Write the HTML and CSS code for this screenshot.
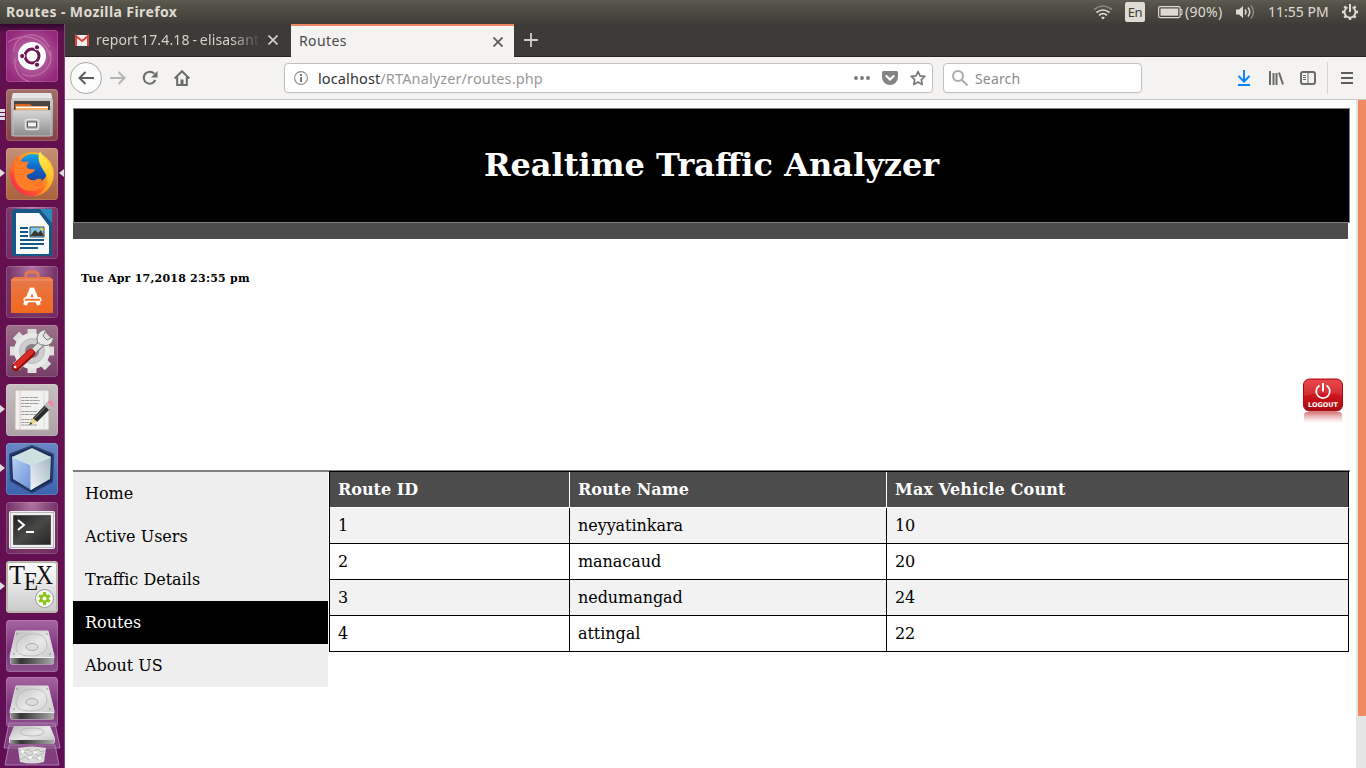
FILE: index.html
```html
<!DOCTYPE html>
<html lang="en">
<head>
<meta charset="utf-8">
<title>Routes</title>
<link rel="stylesheet" href="styles.css">
</head>
<body>
<svg width="0" height="0" class="defs">
  <defs>
    <linearGradient id="silver" x1="0" y1="0" x2="0" y2="1"><stop offset="0" stop-color="#d6d6d6"/><stop offset="1" stop-color="#8d8d8d"/></linearGradient>
    <linearGradient id="metal" x1="0" y1="0" x2="1" y2="1"><stop offset="0" stop-color="#b8b8b8"/><stop offset=".5" stop-color="#e8e8e8"/><stop offset="1" stop-color="#c4c4c4"/></linearGradient>
    <linearGradient id="flame" x1="1" y1="0" x2="0" y2="1"><stop offset="0" stop-color="#ffd22f"/><stop offset=".35" stop-color="#ffa422"/><stop offset=".62" stop-color="#ff5a2a"/><stop offset=".85" stop-color="#f5334a"/><stop offset="1" stop-color="#e31587"/></linearGradient>
    <linearGradient id="tail" x1="0" y1="0" x2="0" y2="1"><stop offset="0" stop-color="#fff251"/><stop offset=".6" stop-color="#ffc02b"/><stop offset="1" stop-color="#ff8a20"/></linearGradient>
    <linearGradient id="globe" x1="0" y1="0" x2="0" y2="1"><stop offset="0" stop-color="#19a4ea"/><stop offset=".5" stop-color="#0d62c4"/><stop offset="1" stop-color="#1a3c94"/></linearGradient>
    <linearGradient id="bag" x1="0" y1="0" x2="0" y2="1"><stop offset="0" stop-color="#e8784a"/><stop offset="1" stop-color="#f0691f"/></linearGradient>
    <linearGradient id="cubeL" x1="0" y1="0" x2="1" y2="1"><stop offset="0" stop-color="#b6d0f6"/><stop offset="1" stop-color="#6d92d4"/></linearGradient>
    <linearGradient id="cubeR" x1="0" y1="1" x2="1" y2="0"><stop offset="0" stop-color="#eef4f8"/><stop offset="1" stop-color="#a3b6bf"/></linearGradient>
    <linearGradient id="screen" x1="0" y1="0" x2="1" y2="1"><stop offset="0" stop-color="#202020"/><stop offset=".5" stop-color="#484a47"/><stop offset="1" stop-color="#252525"/></linearGradient>
    <linearGradient id="red" x1="0" y1="0" x2="0" y2="1"><stop offset="0" stop-color="#e8343a"/><stop offset=".5" stop-color="#cf151c"/><stop offset="1" stop-color="#a90a10"/></linearGradient>
    <linearGradient id="fade" x1="0" y1="0" x2="0" y2="1"><stop offset="0" stop-color="#c1262b" stop-opacity=".65"/><stop offset="1" stop-color="#d98286" stop-opacity="0"/></linearGradient>
    <linearGradient id="edge" x1="0" y1="0" x2="1" y2="0"><stop offset="0" stop-color="#999"/><stop offset=".25" stop-color="#333"/><stop offset="1" stop-color="#aaa"/></linearGradient>
    <symbol id="drive" viewBox="0 0 46 36">
      <path d="M7 1h32l6 25-1 8H2L1 26Z" fill="url(#metal)" stroke="#ddd"/>
      <path d="M1 28h44v6H2Z" fill="url(#edge)"/>
      <path d="M1 27.500h44" stroke="#f0f0f0" stroke-width="1.200"/>
      <path d="M7 18c0-8 7-14 17-14 9 0 13 3 14 10 1 8-7 12-16 12-8 0-15-2-15-8Z" fill="none" stroke="#b5b5b5" stroke-width=".8"/>
      <ellipse cx="23" cy="17" rx="6" ry="3.500" fill="#ddd" stroke="#aaa"/>
      <circle cx="8" cy="4" r=".8" fill="#888"/><circle cx="38" cy="4" r=".8" fill="#888"/><circle cx="5" cy="24" r=".8" fill="#888"/><circle cx="41" cy="24" r=".8" fill="#888"/>
    </symbol>
  </defs>
</svg>

<header class="panel">
  <span class="panel-title">Routes - Mozilla Firefox</span>
  <div class="indicators">
    <svg class="wifi" width="20" height="16" viewBox="0 0 20 16" fill="none" stroke="#dfdbd2" stroke-width="1.700"><path d="M1 5.500q9-7 18 0" stroke="#8b8880"/><path d="M3.500 8.500q6.500-5 13 0M6 11.300q4-3.200 8 0"/><path d="M8 13.500q2-1.500 4 0l-2 2Z" fill="#dfdbd2" stroke="none"/></svg>
    <span class="lang">En</span>
    <svg class="battery" width="25" height="14" viewBox="0 0 25 14"><rect x=".6" y="1.600" width="21.500" height="11" rx="1.500" fill="none" stroke="#dfdbd2" stroke-width="1.200"/><path d="M2.500 3.500h17.700v7.200H2.500Z" fill="#dfdbd2"/><path d="M22 4.500h2v5h-2" fill="none" stroke="#dfdbd2"/></svg>
    <span class="charge">(90%)</span>
    <svg class="volume" width="20" height="16" viewBox="0 0 20 16" fill="none" stroke="#dfdbd2" stroke-width="1.500"><path d="M1 5.500h3L8 2v12l-4-3.500H1Z" fill="#dfdbd2" stroke="none"/><path d="M10 5.500q2 2.500 0 5M13 3.500q3.500 4.500 0 9"/><path d="M16 1.500q5 6.500 0 13" stroke="#8b8880"/></svg>
    <span class="clock">11:55 PM</span>
    <svg class="gear" width="18" height="18" viewBox="0 0 18 18" fill="none" stroke="#dfdbd2"><path d="M6.500 4.200a5.500 5.500 0 1 0 5 0" stroke-width="1.800"/><path d="M9 1v8" stroke-width="2"/><path d="M3.300 3.300l1.700 1.700M14.700 3.300L13 5M1 9h2.500M14.500 9H17M3.300 14.700L5 13M14.700 14.700L13 13M9 14.500V17" stroke-width="2.400"/></svg>
  </div>
</header>

<div class="desktop">
  <nav class="launcher">
    <div class="tile dash"><svg viewBox="0 0 52 52"><g fill="none" stroke="#e9b4da" stroke-opacity=".4" stroke-width="1.200"><path d="M8 22C7 4 34-3 43 17M44 21c5 18-13 30-28 23M9 28C8 42 14 49 24 52M2 12C18 3 38 5 45 28"/></g><circle cx="26" cy="26" r="14" fill="#fff"/><circle cx="26" cy="26" r="7" fill="none" stroke="#711454" stroke-width="3"/><g fill="#711454" stroke="#fff"><circle cx="16.200" cy="26" r="2.600"/><circle cx="31" cy="17.300" r="2.600"/><circle cx="31" cy="34.700" r="2.600"/></g></svg></div>
    <div class="tile files multi"><svg viewBox="0 0 52 52"><path d="M7 4h38l2 8v35H5V12Z" fill="url(#silver)"/><path d="M7 4h38l1 5H6Z" fill="#e6e6e6"/><path d="M8 12h36v12H8Z" fill="#4b4541"/><path d="M9 15h15l2 2h16v6H9Z" fill="#d5671d"/><path d="M10 17.500h32v1.500H10Z" fill="#fff"/><path d="M10 19h32v3H10Z" fill="#f6ae65"/><path d="M7 21.500h38V47H7Z" fill="url(#silver)" stroke="#c3c3c3"/><rect x="19.500" y="30.500" width="13" height="10" rx="2" fill="#aaa" stroke="#e3e3e3" stroke-width="1.500"/><path d="M21.500 33h9v5h-9Z" fill="#f4f4f4" stroke="#555"/></svg></div>
    <div class="tile firefox running current"><svg viewBox="0 0 52 52"><circle cx="26" cy="26" r="22" fill="url(#flame)"/><path d="M5 24C4 17 8 12 11 8q1 4 5 6l-4 8Z" fill="#ff6a2b"/><circle cx="27" cy="21" r="15" fill="url(#globe)"/><path d="M8 13q6-1 10 1 3-1 5 0-3 3-2 6 4 2 8 1 0 3-6 5-3 1-2 3c3 4 7 4 10 2q4-1 5 1-3 5-9 5 6 3 12-1-5 7-14 7C12 43 6 30 9 19Z" fill="#ff7d26"/><path d="M34 3c3 7 14 12 13 26-1 11-9 18-18 19 9-4 14-11 12-19-2-7-12-14-7-26Z" fill="url(#tail)"/></svg></div>
    <div class="tile writer"><svg viewBox="0 0 52 52"><path d="M10 2h24l12 14v33H8q-2 0-2-3V5q0-3 4-3Z" fill="#155787"/><path d="M10 6h23l10 12v28q0 1-1 1H10Z" fill="#fafafa"/><path d="M34 2h12v14Z" fill="#278cbd"/><path d="M34 7l9 12V16L35 5Z" fill="#1a5b89"/><path d="M14 21h8M14 25h8M14 29h8M14 33h24M14 37h24M14 41h18" stroke="#155787" stroke-width="1.800"/><path d="M24 20h14v10H24Z" fill="#83c7e8" stroke="#34495a"/><path d="M24 29l5-6 3 3 3-3 3 6Z" fill="#3b382e"/><circle cx="36" cy="22" r="1.600" fill="#f4d33f"/></svg></div>
    <div class="tile software"><svg viewBox="0 0 52 52"><path d="M5 14l3-3h36l3 3v33H5Z" fill="url(#bag)"/><path d="M20 18V9q0-3 3-3h6q3 0 3 3v9" fill="none" stroke="#e6794c" stroke-width="3"/><path d="M5 14h42" stroke="#f29867"/><path d="M26 22l-7 17M26 22l7 17" stroke="#fff" stroke-width="4"/><rect x="18" y="32" width="17" height="3.500" rx="1.700" fill="#ef7630" stroke="#fff" stroke-width="1.300"/></svg></div>
    <div class="tile settings"><svg viewBox="0 0 52 52"><g stroke="#dedede" stroke-width="9"><path d="M26 4v44M4 26h44M10 10l32 32M42 10L10 42"/></g><circle cx="26" cy="26" r="18" fill="#e8e8e8"/><circle cx="26" cy="26" r="12.500" fill="#cdcdcd" stroke="#bbb"/><circle cx="26" cy="26" r="7" fill="#8c7c87"/><path d="M19 34L38 16" stroke="#777" stroke-width="7"/><path d="M19 34L38 16" stroke="#e1e1e1" stroke-width="5"/><path d="M31 14c0-6 5-10 9-9l-3 6 4 4 6-3c1 6-5 10-10 8-4 0-6-3-6-6Z" fill="#e8e8e8" stroke="#777"/><path d="M10 42l15-14" stroke="#8e0d0d" stroke-width="8" stroke-linecap="round"/><path d="M10 41l15-14" stroke="#db2b25" stroke-width="5.500" stroke-linecap="round"/><circle cx="9" cy="42" r="1.300" fill="#fff"/></svg></div>
    <div class="tile gedit running"><svg viewBox="0 0 52 52"><path d="M9 6h34v40H9Z" fill="#f1f1ee" stroke="#b8b2ac"/><path d="M14 6v40" stroke="#efbaba" stroke-width=".8"/><path d="M38 6v40" stroke="#cad6ed" stroke-width=".8"/><path d="M15 13.500h17M15 16.500h19M15 19.500h18M15 22.500h10M15 27.500h16M15 30.500h15M15 35.500h14M15 38.500h11M15 41h16" stroke="#a0a0a2" stroke-dasharray="3 .4 5 .4"/><path d="M26.500 34.500l13-14 4.500 4.500-13 13Z" fill="#282c2c"/><path d="M28.500 34.500l12-12.500" stroke="#888"/><path d="M26.500 34l5 4-8.500 3Z" fill="#e8d383"/><path d="M25 38l-2 3 3-1Z" fill="#222"/><path d="M38 21l3-3 5 5-3 3Z" fill="#bbb"/><path d="M41 18q3-3 6 0 2 3-1 5Z" fill="#e98bac"/></svg></div>
    <div class="tile netbeans running"><svg viewBox="0 0 52 52"><path d="M26 4l20 8-1 26-19 10L6 37 5 12Z" fill="#182549" stroke="#1c2b58" stroke-width="4" stroke-linejoin="round" stroke-opacity=".75"/><path d="M26 5l19 9-20 8L6 14Z" fill="#cde0e0"/><path d="M6 14l19 8v25L7 36Z" fill="url(#cubeL)"/><path d="M45 14l-20 8v25l19-11Z" fill="url(#cubeR)"/><path d="M6 14l19 8 20-8M25 22v25" fill="none" stroke="#dcebf6"/></svg></div>
    <div class="tile terminal"><svg viewBox="0 0 52 52"><rect x="3.500" y="9.500" width="45" height="37" rx="1" fill="#b8b8b8" stroke="#eee"/><path d="M5 11h42v34H5Z" fill="#efefef"/><path d="M7.500 13.500h37v29h-37Z" fill="url(#screen)" stroke="#555"/><path d="M12 18l6 5-6 5M20 30h8" fill="none" stroke="#fff" stroke-width="2"/></svg></div>
    <div class="tile tex running"><svg viewBox="0 0 52 52"><g font-family="Liberation Serif, serif" font-size="27" fill="#111"><text x="3" y="23" textLength="16" lengthAdjust="spacingAndGlyphs">T</text><text x="18" y="29" font-size="26" textLength="14" lengthAdjust="spacingAndGlyphs">E</text><text x="30" y="23" textLength="17" lengthAdjust="spacingAndGlyphs">X</text></g><circle cx="38.500" cy="37.500" r="9" fill="#f7f7f7" stroke="#999"/><g stroke="#8cc716" stroke-width="3"><path d="M38.500 31v13M33 34.500l11 6M33 40.500l11-6"/></g><circle cx="38.500" cy="37.500" r="4.500" fill="#8cc716"/><circle cx="38.500" cy="37.500" r="2" fill="#fff"/></svg></div>
    <div class="tile disk"><svg viewBox="0 0 52 52"><use href="#drive" x="3" y="10" width="46" height="36"/></svg></div>
    <div class="tile disk last"><svg viewBox="0 0 52 52"><use href="#drive" x="3" y="8" width="46" height="36"/></svg></div>
    <svg class="stack" width="58" height="45" viewBox="0 0 58 45"><path d="M6 1h46l5 25H1Z" fill="#a267a1" fill-opacity=".55" stroke="#a87daa"/><path d="M11 4h36l5 12v5H6v-5Z" fill="url(#metal)"/><path d="M7 18h44v4H7Z" fill="url(#edge)"/><ellipse cx="29" cy="10" rx="12" ry="4" fill="none" stroke="#bbb"/><path d="M6 23h46l4 20H2Z" fill="#925b92" fill-opacity=".65" stroke="#a87daa"/><path d="M15 26q14-3 28 0l-2 14q-12 3-24 0Z" fill="#dadada"/><path d="M15 27l5 3 5-3 4 3 6-3 3 3 5-2M17 32l5-2 4 4 5-3 4 3 6-3M17 38l5-3 4 3 5-3 4 3 5-3" fill="none" stroke="#aaa" stroke-width=".8"/><path d="M18 28l4 1-3 3ZM30 29l5 1-4 2ZM25 35l4-1-1 4ZM35 35l4 1-3 2Z" fill="#fff"/></svg>
  </nav>

  <main class="browser">
    <div class="tabs">
      <div class="tab"><svg width="14" height="12" viewBox="0 0 14 12"><path d="M0 1h14v11H0Z" fill="#eee"/><path d="M1 12V2l6 5 6-5v10" fill="none" stroke="#db4437" stroke-width="2"/></svg><span class="tab-label faded">report 17.4.18 - elisasant</span><svg class="close" width="10" height="10" viewBox="0 0 10 10"><path d="M.5.5l9 9M9.500.5l-9 9" stroke="#d5d2ca" stroke-width="1.600"/></svg></div>
      <div class="tab active"><span class="tab-label">Routes</span><svg class="close" width="10" height="10" viewBox="0 0 10 10"><path d="M.5.5l9 9M9.500.5l-9 9" stroke="#5d5d59" stroke-width="1.800"/></svg></div>
      <svg class="plus" width="14" height="14" viewBox="0 0 14 14"><path d="M7 0v14M0 7h14" stroke="#d2cfc8" stroke-width="1.800"/></svg>
    </div>
    <div class="toolbar">
      <div class="back"><svg width="16" height="14" viewBox="0 0 16 14" fill="none" stroke="#5d5d5b" stroke-width="2"><path d="M16 7H1.500M7.500 1l-6 6 6 6"/></svg></div>
      <svg class="forward" width="16" height="14" viewBox="0 0 16 14" fill="none" stroke="#b5b5b4" stroke-width="2"><path d="M0 7h14.500M8.500 1l6 6-6 6"/></svg>
      <svg class="reload" width="16" height="16" viewBox="0 0 16 16"><path d="M13.300 10a6 6 0 1 1-1-6.300" fill="none" stroke="#6a6a68" stroke-width="2"/><path d="M15.500 1v6.500H9Z" fill="#6a6a68"/></svg>
      <svg class="home" width="16" height="16" viewBox="0 0 16 16"><path d="M.7 8.500L8 1.200l7.300 7.300M3.200 7v8h9.600V7" fill="none" stroke="#6a6a68" stroke-width="2"/><path d="M6.500 15V9.500h3V15" fill="#6a6a68"/></svg>
      <div class="address">
        <svg width="14" height="14" viewBox="0 0 14 14"><circle cx="7" cy="7" r="6.400" fill="none" stroke="#8c8c8c" stroke-width="1.100"/><path d="M6 6h2v5H6ZM6 3h2v2H6Z" fill="#777"/></svg>
        <span class="url"><b>localhost</b>/RTAnalyzer/routes.php</span>
        <svg class="dots" width="16" height="4" viewBox="0 0 16 4" fill="#777"><circle cx="2" cy="2" r="1.900"/><circle cx="8" cy="2" r="1.900"/><circle cx="14" cy="2" r="1.900"/></svg>
        <svg class="pocket" width="16" height="14" viewBox="0 0 16 14"><path d="M1.500 0h13Q16 0 16 1.500V6a8 8 0 0 1-16 0V1.500Q0 0 1.500 0Z" fill="#848484"/><path d="M4.300 5L8 8.500 11.700 5" fill="none" stroke="#fff" stroke-width="2" stroke-linecap="round"/></svg>
        <svg class="star" width="16" height="16" viewBox="0 0 16 16"><path d="M8 1.500l2 4.300 4.800.6-3.500 3.200.9 4.800L8 12.100l-4.200 2.300.9-4.800L1.200 6.400 6 5.800Z" fill="none" stroke="#777" stroke-width="1.700" stroke-linejoin="round"/></svg>
      </div>
      <div class="search"><svg width="16" height="16" viewBox="0 0 16 16" fill="none" stroke="#aaa" stroke-width="2"><circle cx="6" cy="6" r="5"/><path d="M9.700 9.700l5.800 5.800"/></svg><span>Search</span></div>
      <div class="tools">
        <svg width="14" height="16" viewBox="0 0 14 16" fill="none" stroke="#0a84ff" stroke-width="2"><path d="M7 0v11M1.500 6L7 11.500 12.500 6M1 15h12"/></svg>
        <svg width="16" height="14" viewBox="0 0 16 14" stroke="#6a6a68" stroke-width="2"><path d="M2 0v14M5.500 2v12M8.500 2v12M11 1.500L15 13.500"/></svg>
        <svg width="16" height="14" viewBox="0 0 16 14" fill="none" stroke="#6a6a68"><rect x="1" y="1" width="14" height="12" rx="2" stroke-width="2"/><path d="M8 1v12M3 4.500h3M3 6.500h3M3 8.500h3"/></svg>
      </div>
      <div class="menu"><svg width="12" height="12" viewBox="0 0 12 12"><path d="M0 1h12M0 6h12M0 11h12" stroke="#5d5d5b" stroke-width="1.800"/></svg></div>
    </div>

    <div class="viewport">
      <div class="page">
        <div class="banner"><h1>Realtime Traffic Analyzer</h1></div>
        <div class="strip"></div>
        <div class="info">
          <h6>Tue Apr 17,2018 23:55 pm</h6>
          <svg class="logout" width="42" height="46" viewBox="0 0 42 46"><rect x="1.500" y="1" width="39" height="32" rx="6" fill="url(#red)" stroke="#a90d13"/><path d="M2 18V7q0-5 5-5h28q5 0 5 5v10Q21 13 2 18Z" fill="#fff" fill-opacity=".1"/><path d="M17.500 7.500a6.800 6.800 0 1 0 7 0" fill="none" stroke="#fff" stroke-width="1.800"/><path d="M21 5v8.500" stroke="#fff" stroke-width="2"/><text x="6" y="29" font-family="DejaVu Sans, sans-serif" font-size="6.500" font-weight="bold" fill="#fff" textLength="30" lengthAdjust="spacingAndGlyphs">LOGOUT</text><path d="M2 37q0-3 4-3h30q4 0 4 3v8H2Z" fill="url(#fade)"/></svg>
        </div>
        <div class="rule"></div>
        <div class="columns">
          <ul class="side">
            <li>Home</li><li>Active Users</li><li>Traffic Details</li><li class="selected">Routes</li><li>About US</li>
          </ul>
          <table class="routes">
            <colgroup><col class="c-id"><col class="c-name"><col class="c-count"></colgroup>
            <thead><tr><th>Route ID</th><th>Route Name</th><th class="count">Max Vehicle Count</th></tr></thead>
            <tbody>
              <tr><td>1</td><td>neyyatinkara</td><td>10</td></tr>
              <tr><td>2</td><td>manacaud</td><td>20</td></tr>
              <tr><td>3</td><td>nedumangad</td><td>24</td></tr>
              <tr><td>4</td><td>attingal</td><td>22</td></tr>
            </tbody>
          </table>
        </div>
      </div>
      <div class="scrollbar"><div class="thumb"></div></div>
    </div>
  </main>
</div>
</body>
</html>
```
FILE: styles.css
```css
* { box-sizing: border-box; }
body { margin: 0; width: 1366px; height: 768px; overflow: hidden; background: #fff; font-family: "Noto Sans", sans-serif; font-size: 14px; }
svg { display: block; flex: none; }
.defs { position: absolute; }

.panel { height: 24px; display: flex; justify-content: space-between; align-items: center; padding: 0 7px 0 6px; background: linear-gradient(#5e5b50, #565349 15%, #3d3c37); color: #dfdbd2; }
.panel-title { font-weight: bold; font-size: 14px; line-height: 24px; letter-spacing: .4px; white-space: nowrap; }
.indicators { display: flex; align-items: center; height: 24px; line-height: 24px; }
.lang { width: 20px; height: 20px; margin: 0 13px 0 12px; border-radius: 2px; background: #dfdbd2; color: #3c3b37; font-size: 13px; line-height: 21px; text-align: center; letter-spacing: -.5px; }
.charge { width: 39px; margin: 0 11px 0 2px; letter-spacing: .3px; }
.clock { width: 62px; margin: 0 11px 0 13px; white-space: nowrap; letter-spacing: 0; }

.desktop { display: flex; height: 744px; }
.launcher { width: 65px; flex: none; padding: 6px 0 0 6px; overflow: hidden; background: linear-gradient(#32062c, #63104f 9px, #65104f 50%, #600e55); border-right: 1px solid #85437a; }
.tile { position: relative; width: 52px; height: 52px; margin-bottom: 7px; border-radius: 4px; box-shadow: inset 0 0 0 1px #ffffff26; background: radial-gradient(ellipse at 50% 0, #ad75a2, #783568 65%, #6f285f); }
.tile svg { width: 52px; height: 52px; }
.dash { background: radial-gradient(circle, #c784b1, #95277c 80%); }
.files { background: linear-gradient(#a36f6c, #884047); }
.firefox { background: linear-gradient(#c59079, #a9613c); }
.settings { background: linear-gradient(#9d718c, #753e65); }
.gedit { background: linear-gradient(#c8bfc2, #aca0a5); }
.netbeans { background: linear-gradient(#6986c4, #3c63ae); }
.tex { background: linear-gradient(#fff, #c9c9c9); box-shadow: inset 0 0 0 2px #b9b7ac; }
.disk { background: linear-gradient(#a565a1, #7a3078 60%, #8d538d); }
.disk.last { height: 50px; margin: -2px 0 -5px; }
.stack { position: relative; margin-left: -3px; }
.running::before { content: ""; position: absolute; left: -6px; top: 21px; border: 4px solid transparent; border-left: 5px solid #ddd; border-right: 0; }
.current::after { content: ""; position: absolute; right: -6px; top: 21px; border: 4px solid transparent; border-right: 5px solid #ddd; border-left: 0; }
.multi::before { content: ""; position: absolute; left: -6px; top: 20px; width: 5px; height: 11px; background: repeating-linear-gradient(#ddd 0 3px, transparent 3px 4px); }

.browser { width: 1301px; display: flex; flex-direction: column; }
.tabs { height: 33px; display: flex; background: #3c3b37; border-bottom: 1px solid #262522; }
.tab { width: 226px; display: flex; align-items: center; padding: 0 13px 0 10px; color: #d5d2ca; }
.tab-label { margin-left: 7px; flex: 1; white-space: nowrap; overflow: hidden; line-height: 32px; }
.faded { width: 165px; flex: none; margin-right: 7px; padding-bottom: 1px; word-spacing: -1px; letter-spacing: .15px; -webkit-mask-image: linear-gradient(90deg, #000 82%, transparent); mask-image: linear-gradient(90deg, #000 82%, transparent); }
.active { width: 223px; height: 33px; padding: 0 11px 2px 1px; border-top: 2px solid #f08763; background: #f4f3f2; color: #484848; }
.active .tab-label { line-height: 29px; letter-spacing: .4px; }
.active .close { margin-top: 2px; }
.plus { margin: 9px 0 0 10px; }
.toolbar { height: 43px; display: flex; align-items: center; padding: 0 0 0 5px; background: #f4f3f2; border-bottom: 1px solid #c7c6c4; }
.back { width: 32px; height: 32px; flex: none; display: grid; place-items: center; border: 1px solid #aaa; border-radius: 50%; background: #fcfcfc; }
.forward { margin-left: 8px; }
.reload { margin-left: 16px; }
.home { margin-left: 16px; }
.address, .search { height: 30px; display: flex; align-items: center; border: 1px solid #c2c1bf; border-radius: 4px; background: #fff; box-shadow: 0 1px 2px #0000000c; }
.address { width: 649px; margin-left: 94px; padding: 0 6px 0 9px; }
.url { flex: 1; margin-left: 10px; color: #999; font-size: 14.5px; letter-spacing: .12px; }
.url b { color: #333; font-weight: normal; }
.pocket { margin-left: 12px; }
.star { margin-left: 12px; }
.search { width: 199px; margin-left: 10px; padding-left: 8px; color: #8c8c8c; }
.search span { margin-left: 7px; letter-spacing: .15px; }
.tools { display: flex; align-items: center; gap: 16px; margin-left: 95px; }
.tools svg:nth-child(2) { margin-left: 1px; }
.menu { height: 32px; display: flex; align-items: center; margin-left: 11px; padding-left: 13px; border-left: 1px solid #d5d4d2; }

.viewport { flex: 1; display: flex; justify-content: space-between; background: #fff; }
.page { width: 1285px; padding: 8px 0 0 8px; font-family: "DejaVu Serif", serif; font-size: 16px; color: #000; }
.banner { height: 115px; display: grid; place-items: center; border: 1px solid #808080; background: #000; }
.banner h1 { margin: 0; padding-bottom: 2px; color: #fff; font-size: 32px; line-height: 38px; }
.strip { width: 1275px; height: 16px; background: #4c4c4c; }
.info { height: 231px; padding: 33px 6px 0 8px; display: flex; flex-direction: column; justify-content: space-between; }
.info h6 { margin: 0; font-size: 11px; line-height: 14px; letter-spacing: .23px; }
.logout { align-self: flex-end; margin-bottom: 46px; }
.rule { height: 2px; background: #808080; }
.columns { display: flex; align-items: flex-start; }
.side { width: 255px; margin: 0 1px 0 0; padding: 0; list-style: none; background: #eee; }
.side li { height: 43px; padding: 0 12px; line-height: 43px; }
.side .selected { background: #000; color: #fff; }
.routes { width: 1020px; margin-top: -1px; table-layout: fixed; border-collapse: separate; border-spacing: 0; border: 1px solid #000; border-width: 1px 0 0 1px; }
.c-id { width: 240px; }
.c-name { width: 317px; }
.c-count { width: 462px; }
.routes th, .routes td { height: 36px; padding: 0 8px; text-align: left; line-height: 35px; border-right: 1px solid #000; border-bottom: 1px solid #000; }
.routes td { letter-spacing: -.06px; }
.routes th { background: #4c4c4c; color: #fff; border-right-color: #fff; border-bottom-color: #fff; }
.routes th:last-child { border-right-color: #000; }
.routes .count { letter-spacing: .17px; }
.routes tbody tr:nth-child(odd) { background: #f2f2f2; }
.scrollbar { width: 10px; background: #e5e5e5; padding-left: 2px; }
.thumb { height: 616px; background: #f08a62; border-radius: 0 0 1px 1px; }
```
